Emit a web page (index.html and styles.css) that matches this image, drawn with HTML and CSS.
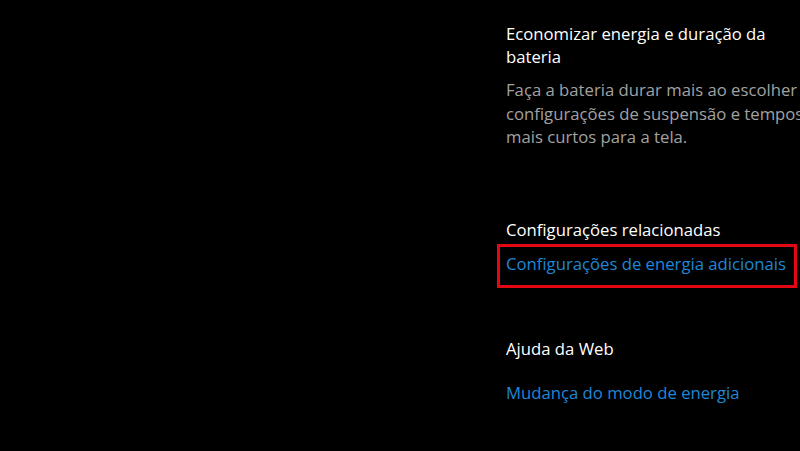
FILE: index.html
```html
<!DOCTYPE html>
<html lang="pt-BR">
<head>
<meta charset="utf-8">
<link rel="stylesheet" href="styles.css">
</head>
<body>
<div class="page">
  <div class="left"></div>
  <aside class="side">
    <section class="block">
      <h2 class="title">Economizar energia e duração da bateria</h2>
      <p class="desc">Faça a bateria durar mais ao escolher configurações de suspensão e tempos mais curtos para a tela.</p>
    </section>
    <section class="block related">
      <h2 class="title">Configurações relacionadas</h2>
      <div class="highlight"><a class="link" href="#">Configurações de energia adicionais</a></div>
    </section>
    <section class="block help">
      <h2 class="title">Ajuda da Web</h2>
      <a class="link web" href="#">Mudança do modo de energia</a>
    </section>
  </aside>
</div>
</body>
</html>
```
FILE: styles.css
```css
html, body {
  margin: 0;
  padding: 0;
  background: #000;
  height: 451px;
  overflow: hidden;
}
body {
  font-family: "Open Sans", "Noto Sans", sans-serif;
  font-size: 16.7px;
  color: #fff;
}
.page {
  display: grid;
  grid-template-columns: 506px 300px;
}
.side {
  padding-top: 22px;
  min-width: 0;
}
.title {
  margin: 0;
  font-size: 16.7px;
  font-weight: 400;
  line-height: 23px;
  color: #fff;
}
.desc {
  margin: 10px 0 0;
  font-size: 16.7px;
  line-height: 23.5px;
  color: #a2a2a2;
}
.related {
  margin-top: 69px;
}
.highlight {
  box-sizing: border-box;
  margin: 3px 0 0 -9px;
  width: 300px;
  border: 3px solid #e30613;
  padding: 5px 0 10px 6px;
}
.link {
  display: block;
  font-size: 16.7px;
  line-height: 23px;
  color: #1f87d6;
  text-decoration: none;
  white-space: nowrap;
}
.help {
  margin-top: 49px;
}
.web {
  margin-top: 21px;
}
```
